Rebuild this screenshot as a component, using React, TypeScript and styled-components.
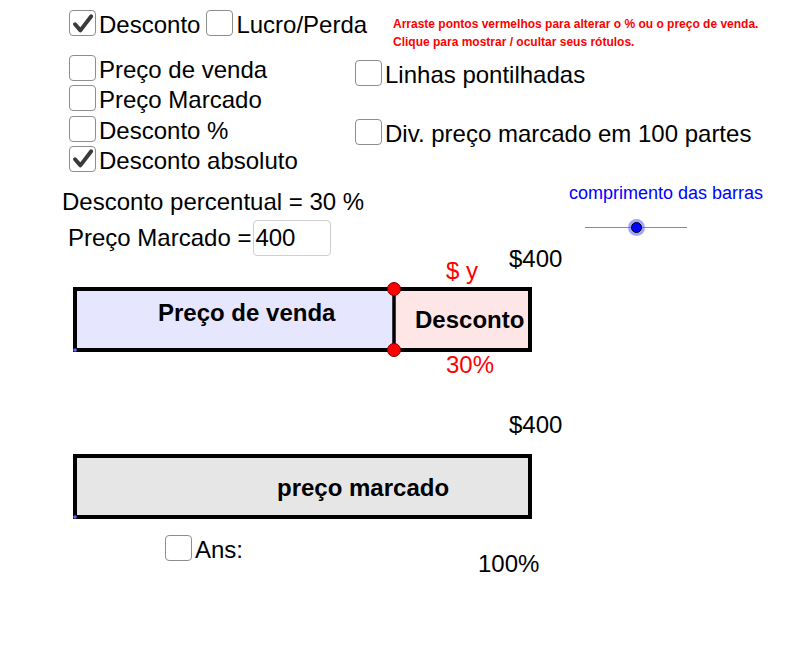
import React from "react";
import styled, { createGlobalStyle } from "styled-components";

const Global = createGlobalStyle`
  html, body { margin: 0; padding: 0; background: #ffffff; }
  body { font-family: "Liberation Sans", Arial, sans-serif; color: #000; }
`;

const Canvas = styled.div`
  position: relative;
  width: 806px;
  height: 668px;
  overflow: hidden;
  background: #ffffff;
  font-family: "Liberation Sans", Arial, sans-serif;
`;

const Item = styled.label`
  display: flex;
  align-items: flex-start;
  gap: 3px;
  height: 30px;
  font-size: 24px;
  line-height: 30px;
  white-space: nowrap;
  cursor: pointer;
`;

const Box = styled.span`
  flex: none;
  box-sizing: border-box;
  width: 27px;
  height: 26px;
  border: 1.5px solid #8e8e8e;
  border-radius: 4px;
  background: #fff;
  display: flex;
  align-items: center;
  justify-content: center;
`;

const Check = ({ label, checked }: { label: string; checked?: boolean }) => (
  <Item>
    <Box>
      {checked && (
        <svg width="24" height="23" viewBox="0 0 24 23">
          <path d="M4 12.3 L9.4 18.4 L20.2 4.3" fill="none" stroke="#3a3a3a" strokeWidth="3.9" strokeLinecap="round" strokeLinejoin="round" />
        </svg>
      )}
    </Box>
    <span>{label}</span>
  </Item>
);

const TopRow = styled.div`
  position: absolute;
  left: 69px;
  top: 10px;
  display: flex;
  gap: 6px;
`;

const Hint = styled.div`
  position: absolute;
  left: 393px;
  top: 16px;
  color: #ff0000;
  font-size: 12px;
  font-weight: bold;
  line-height: 17.5px;
  white-space: nowrap;
`;

const LeftList = styled.div`
  position: absolute;
  left: 69px;
  top: 55px;
  display: flex;
  flex-direction: column;
  gap: 0.3px;
`;

const RightList = styled.div`
  position: absolute;
  left: 355px;
  top: 60px;
  display: flex;
  flex-direction: column;
  gap: 29px;
`;

const Formula = styled.div`
  position: absolute;
  left: 62px;
  top: 188px;
  display: flex;
  flex-direction: column;
  gap: 4px;
  font-size: 24px;
`;

const Line = styled.div`
  line-height: 28px;
  white-space: nowrap;
`;

const InputRow = styled.div`
  display: flex;
  align-items: center;
  gap: 2px;
  padding-left: 6px;
  height: 36px;
  line-height: 28px;
  white-space: nowrap;
`;

const Field = styled.div`
  box-sizing: border-box;
  width: 78px;
  height: 36px;
  border: 1px solid #cfcfcf;
  border-radius: 4px;
  padding-left: 1px;
  font-size: 24px;
  line-height: 34px;
`;

const SliderBlock = styled.div`
  position: absolute;
  left: 569px;
  top: 183px;
  display: flex;
  flex-direction: column;
`;

const SliderLabel = styled.div`
  color: #0000ff;
  font-size: 18px;
  line-height: 20px;
  white-space: nowrap;
`;

const Track = styled.div`
  position: relative;
  margin-top: 24px;
  margin-left: 16px;
  width: 102px;
  height: 1px;
  background: #7f7fff;
`;

const Knob = styled.div`
  position: absolute;
  left: 51px;
  top: 0.5px;
  width: 17px;
  height: 17px;
  margin: -8.5px 0 0 -8.5px;
  border-radius: 50%;
  background: rgba(90, 90, 255, 0.55);
  display: flex;
  align-items: center;
  justify-content: center;
  &::after {
    content: "";
    box-sizing: border-box;
    width: 11px;
    height: 11px;
    border-radius: 50%;
    background: #0000ff;
    border: 1.5px solid #000;
  }
`;

const Diagram = styled.svg`
  position: absolute;
  left: 60px;
  top: 240px;
  font-family: "Liberation Sans", Arial, sans-serif;
`;

const AnsSpot = styled.div`
  position: absolute;
  left: 165px;
  top: 535px;
`;

export default function App() {
  return (
    <>
      <Global />
      <Canvas>
        <TopRow>
          <Check label="Desconto" checked />
          <Check label="Lucro/Perda" />
        </TopRow>

        <Hint>
          <div>Arraste pontos vermelhos para alterar o % ou o preço de venda.</div>
          <div>Clique para mostrar / ocultar seus rótulos.</div>
        </Hint>

        <LeftList>
          <Check label="Preço de venda" />
          <Check label="Preço Marcado" />
          <Check label="Desconto %" />
          <Check label="Desconto absoluto" checked />
        </LeftList>

        <RightList>
          <Check label="Linhas pontilhadas" />
          <Check label="Div. preço marcado em 100 partes" />
        </RightList>

        <Formula>
          <Line>Desconto percentual = 30 %</Line>
          <InputRow>
            <span>Preço Marcado =</span>
            <Field>400</Field>
          </InputRow>
        </Formula>

        <SliderBlock>
          <SliderLabel>comprimento das barras</SliderLabel>
          <Track>
            <Knob />
          </Track>
        </SliderBlock>

        <Diagram width="520" height="350" viewBox="60 240 520 350">
          <rect x="75" y="289" width="319" height="61" fill="#e6e6ff" />
          <rect x="394" y="289" width="136" height="61" fill="#ffe6e6" />
          <rect x="75" y="289" width="455" height="61" fill="none" stroke="#000" strokeWidth="4" />
          <line x1="394" y1="289" x2="394" y2="350" stroke="#000" strokeWidth="3.5" />
          <circle cx="75" cy="350" r="1.8" fill="#6666ff" />
          <circle cx="394" cy="289" r="6.5" fill="#ff0000" stroke="#7a0000" strokeWidth="1" />
          <circle cx="394" cy="350" r="6.5" fill="#ff0000" stroke="#7a0000" strokeWidth="1" />
          <text x="158" y="321" fontSize="24" fontWeight="bold">Preço de venda</text>
          <text x="415" y="327.5" fontSize="24" fontWeight="bold">Desconto</text>
          <text x="446" y="279" fontSize="24" fill="#ff0000">$ y</text>
          <text x="446" y="372.5" fontSize="24" fill="#ff0000">30%</text>
          <text x="509" y="267" fontSize="24">$400</text>

          <rect x="75" y="456" width="455" height="61" fill="#e6e6e6" stroke="#000" strokeWidth="4" />
          <circle cx="75" cy="517" r="1.8" fill="#6666ff" />
          <text x="277" y="495.5" fontSize="24" fontWeight="bold">preço marcado</text>
          <text x="509" y="433" fontSize="24">$400</text>
          <text x="478" y="572" fontSize="24">100%</text>
        </Diagram>

        <AnsSpot>
          <Check label="Ans:" />
        </AnsSpot>
      </Canvas>
    </>
  );
}
